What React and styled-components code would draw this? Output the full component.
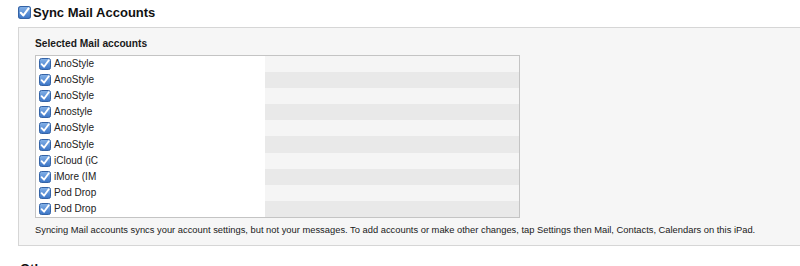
import React from 'react';
import styled, { createGlobalStyle } from 'styled-components';

const GlobalStyle = createGlobalStyle`
  html, body {
    margin: 0;
    padding: 0;
    background: #ffffff;
    overflow: hidden;
  }
  body {
    font-family: "Liberation Sans", Arial, Helvetica, sans-serif;
    color: #1a1a1a;
  }
`;

// names are shown cut short, the rest of the column is blanked out
const accounts = [
  'AnoStyle',
  'AnoStyle',
  'AnoStyle',
  'Anostyle',
  'AnoStyle',
  'AnoStyle',
  'iCloud (iC',
  'iMore (IM',
  'Pod Drop',
  'Pod Drop',
];

const Checkbox = ({ size = 12 }) => (
  <svg width={size} height={size} viewBox="0 0 12 12">
    <defs>
      <linearGradient id="cbfill" x1="0" y1="0" x2="0" y2="1">
        <stop offset="0" stopColor="#86b3e8" />
        <stop offset="1" stopColor="#3a74c6" />
      </linearGradient>
    </defs>
    <rect x="0.5" y="0.5" width="11" height="11" rx="2" fill="url(#cbfill)" stroke="#3463a6" />
    <path d="M2.6 6.2 L5 8.7 L9.8 2.2" fill="none" stroke="#ffffff" strokeWidth="1.9" strokeLinecap="round" strokeLinejoin="round" />
  </svg>
);

const Page = styled.div`
  padding: 6px 0 0 18px;
  width: 800px;
  box-sizing: border-box;
`;

const Heading = styled.div`
  display: flex;
  align-items: center;
  gap: 2px;
  height: 13px;
  font-size: 13px;
  font-weight: bold;
  color: #111;
  line-height: 13px;
`;

const Panel = styled.div`
  margin-top: 8px;
  width: 800px;
  box-sizing: border-box;
  background: #f6f6f6;
  border: 1px solid #d6d6d6;
  border-right: none;
  padding: 9px 0 0 16px;
  height: 219px;
`;

const Label = styled.div`
  font-size: 10.2px;
  font-weight: bold;
  line-height: 13px;
  color: #1a1a1a;
`;

const List = styled.div`
  margin-top: 5px;
  width: 485px;
  box-sizing: border-box;
  border: 1px solid #c4c4c4;
  background: #ffffff;
`;

const Row = styled.div`
  display: flex;
  height: 16.1px;
  background: ${({ $even }) => ($even ? '#e9e9e9' : '#f5f5f5')};
`;

const NameCell = styled.div`
  display: flex;
  align-items: center;
  gap: 3px;
  width: 229px;
  padding-left: 3px;
  box-sizing: border-box;
  background: #ffffff;
`;

const Name = styled.span`
  font-size: 10px;
  color: #222;
  line-height: 12px;
  white-space: nowrap;
`;

const Note = styled.div`
  margin-top: 6px;
  font-size: 9.35px;
  line-height: 12px;
  color: #1a1a1a;
  white-space: nowrap;
`;

const NextHeading = styled(Heading)`
  margin-top: 16px;
  padding-left: 2px;
`;

export default function App() {
  return (
    <>
      <GlobalStyle />
      <Page>
        <Heading>
          <Checkbox size={13} />
          <span>Sync Mail Accounts</span>
        </Heading>
        <Panel>
          <Label>Selected Mail accounts</Label>
          <List>
            {accounts.map((name, i) => (
              <Row key={i} $even={i % 2 === 1}>
                <NameCell>
                  <Checkbox size={12} />
                  <Name>{name}</Name>
                </NameCell>
              </Row>
            ))}
          </List>
          <Note>
            Syncing Mail accounts syncs your account settings, but not your messages. To add accounts or make other changes, tap Settings then Mail, Contacts, Calendars on this iPad.
          </Note>
        </Panel>
        <NextHeading>Other</NextHeading>
      </Page>
    </>
  );
}
